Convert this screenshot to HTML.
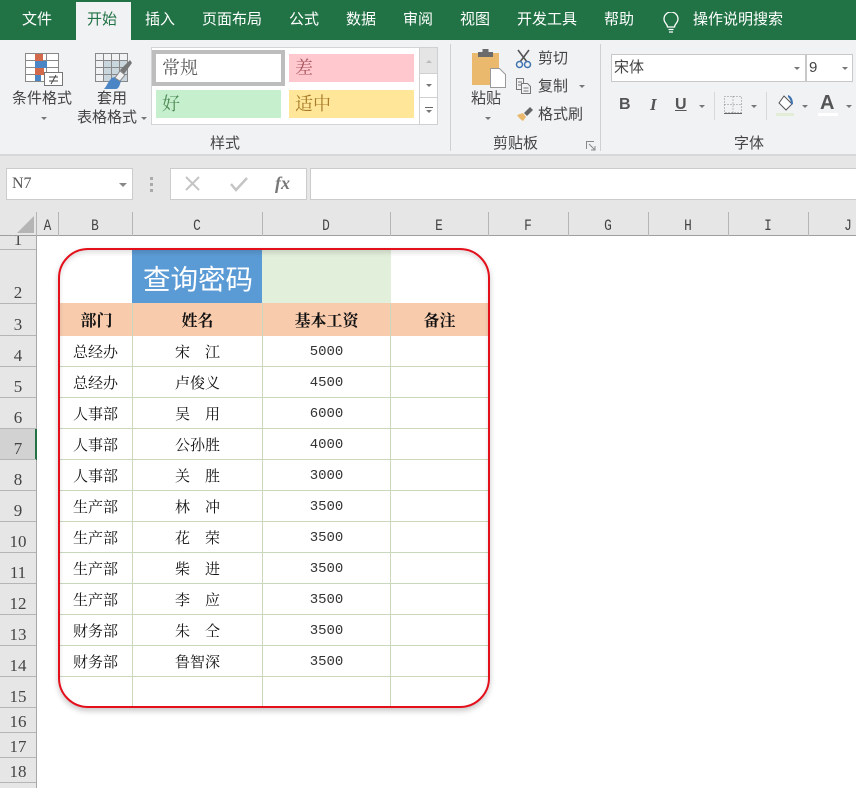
<!DOCTYPE html>
<html lang="zh"><head><meta charset="utf-8"><style>
html,body{margin:0;padding:0}
body{width:856px;height:788px;overflow:hidden;position:relative;background:#fff;font-family:"Liberation Sans","Noto Sans CJK SC",sans-serif;color:#333}
div,span,svg{position:absolute}
.t{white-space:nowrap;font-size:15px;line-height:16px;color:#444}
.tab{color:#fff;top:12px;font-size:15px;line-height:16px;white-space:nowrap}
.s{font-family:"Noto Serif CJK SC","Liberation Serif",serif;color:#111;white-space:nowrap;text-align:center;font-size:15px;line-height:16px}
.hd{font-size:16px;font-weight:700}
.h{top:217px;height:18px;line-height:18px;font-family:"Liberation Mono","Noto Serif CJK SC",monospace;font-size:16px;color:#444;text-align:center;transform:scaleX(.8)}
.r{left:0;width:36px;text-align:center;font-family:"Liberation Serif",serif;font-size:17px;line-height:18px;color:#444}
.n{font-family:"Liberation Mono",monospace;font-size:14px;color:#333;left:262px;width:129px;text-align:center;line-height:16px}
.vl{top:212px;width:1px;height:24px;background:#b5b5b5}
.rl{left:0;width:36px;height:1px;background:#b5b5b5}
.gl{left:60px;width:428px;height:1px;background:#c9d8bd}
.gv{width:1px;background:#c9d8bd}
.a{width:0;height:0;border-left:3px solid transparent;border-right:3px solid transparent;border-top:3px solid #777}
</style></head><body>
<div style="left:0;top:0;width:856px;height:40px;background:#217346"></div>
<div style="left:76px;top:2px;width:55px;height:38px;background:#f1f2f4"></div>
<span class="tab" style="left:22px">文件</span>
<span class="tab" style="left:87px;color:#217346">开始</span>
<span class="tab" style="left:145px">插入</span>
<span class="tab" style="left:202px">页面布局</span>
<span class="tab" style="left:289px">公式</span>
<span class="tab" style="left:346px">数据</span>
<span class="tab" style="left:403px">审阅</span>
<span class="tab" style="left:460px">视图</span>
<span class="tab" style="left:517px">开发工具</span>
<span class="tab" style="left:604px">帮助</span>
<span class="tab" style="left:693px">操作说明搜索</span>
<svg style="left:661px;top:12px" width="20" height="22" viewBox="0 0 20 22" fill="none" stroke="#fff" stroke-width="1.3"><path d="M6.500 15c0-3-3.500-4-3.500-8a7 7 0 0 1 14 0c0 4-3.500 5-3.500 8z"/><path d="M7.500 17.500h5M8 20h4"/></svg>

<div style="left:0;top:40px;width:856px;height:115px;background:#f1f2f4"></div>
<div style="left:0;top:154px;width:856px;height:2px;background:#d8d8d8"></div>

<!-- conditional format icon -->
<svg style="left:24px;top:52px" width="40" height="36" viewBox="0 0 40 36"><g fill="none" stroke="#888" stroke-width="1"><rect x="1.500" y="1.500" width="33" height="28" fill="#fff"/><path d="M1.500 8.500h33M1.500 15.500h33M1.500 22.500h33M11.500 1.500v28M22.500 1.500v28"/></g><rect x="11" y="2" width="8" height="7" fill="#d2694a"/><rect x="11" y="9" width="12" height="7" fill="#4a86c5"/><rect x="11" y="16" width="9" height="7" fill="#d2694a"/><rect x="11" y="23" width="6" height="6" fill="#4a86c5"/><rect x="20.500" y="20.500" width="18" height="13" fill="#fff" stroke="#777"/><path d="M25 25h9M25 29h9M32 23l-5 9" stroke="#444" fill="none"/></svg>
<span class="t" style="left:12px;top:91px">条件格式</span>
<div class="a" style="left:41px;top:117px"></div>
<!-- table format icon -->
<svg style="left:94px;top:52px" width="40" height="38" viewBox="0 0 40 38"><rect x="10" y="9" width="24" height="21" fill="#c9d6de"/><g fill="none" stroke="#888"><rect x="1.500" y="1.500" width="32" height="28"/><path d="M1.500 8.500h32M1.500 15.500h32M1.500 22.500h32M9.500 1.500v28M17.500 1.500v28M25.500 1.500v28"/></g><path d="M26 18l10-10 2 3-8 11z" fill="#777"/><path d="M10 37c3-3 4-8 8-11 3-2 10-1 9 3-1 3-2 8-5 8z" fill="#4a86c5"/><path d="M21 26l5-7 5 4-5 6z" fill="#f1f2f4" stroke="#888"/></svg>
<span class="t" style="left:97px;top:91px">套用</span>
<span class="t" style="left:77px;top:110px">表格格式</span>
<div class="a" style="left:141px;top:117px"></div>

<!-- styles gallery -->
<div style="left:151px;top:47px;width:286px;height:78px;background:#fff;border:1px solid #d4d4d4;box-sizing:border-box"></div>
<div style="left:152px;top:50px;width:133px;height:36px;box-sizing:border-box;border:4px solid #bdbdbd;background:#fff"></div>
<span class="s" style="left:162px;top:58px;font-size:18px;line-height:18px;color:#555">常规</span>
<div style="left:289px;top:54px;width:125px;height:28px;background:#ffc7ce"></div>
<span class="s" style="left:295px;top:58px;font-size:18px;line-height:18px;color:#a8555c">差</span>
<div style="left:156px;top:90px;width:125px;height:28px;background:#c6efce"></div>
<span class="s" style="left:162px;top:94px;font-size:18px;line-height:18px;color:#4e8a55">好</span>
<div style="left:289px;top:90px;width:125px;height:28px;background:#ffe699"></div>
<span class="s" style="left:295px;top:94px;font-size:18px;line-height:18px;color:#a87c28">适中</span>
<div style="left:419px;top:47px;width:19px;height:78px;box-sizing:border-box;border:1px solid #d0d0d0;background:#fff"></div>
<div style="left:420px;top:48px;width:17px;height:25px;background:#e5e5e5;border-bottom:1px solid #d0d0d0"></div>
<div style="left:420px;top:97px;width:17px;height:1px;background:#d0d0d0"></div>
<div class="a" style="left:426px;top:60px;border-top:0;border-bottom:3px solid #bbb"></div>
<div class="a" style="left:426px;top:84px"></div>
<div style="left:425px;top:107px;width:8px;height:1px;background:#666"></div>
<div class="a" style="left:426px;top:110px"></div>
<span class="t" style="left:210px;top:136px">样式</span>
<div style="left:450px;top:44px;width:1px;height:107px;background:#d0d0d0"></div>

<!-- clipboard -->
<svg style="left:470px;top:47px" width="38" height="42" viewBox="0 0 38 42"><rect x="2" y="6" width="27" height="32" fill="#eab96e"/><rect x="8" y="5" width="15" height="5" fill="#6b6b6b"/><rect x="12.500" y="2" width="6" height="5" fill="#6b6b6b"/><path d="M20.500 21.500h9l6 6v13h-15z" fill="#fff" stroke="#999"/></svg>
<span class="t" style="left:471px;top:91px">粘贴</span>
<div class="a" style="left:485px;top:117px"></div>
<svg style="left:515px;top:49px" width="18" height="20" viewBox="0 0 18 20" fill="none"><path d="M3 1l9 12M14 1L5 13" stroke="#555" stroke-width="1.600"/><circle cx="4.500" cy="15.500" r="3" stroke="#3f74b0" stroke-width="1.500"/><circle cx="12.500" cy="15.500" r="3" stroke="#3f74b0" stroke-width="1.500"/></svg>
<span class="t" style="left:538px;top:51px">剪切</span>
<svg style="left:515px;top:77px" width="18" height="18" viewBox="0 0 18 18" fill="none" stroke="#777"><path d="M1.500 1.500h7v11h-7zM3 5h4M3 8h4"/><path d="M6.500 6.500h6l3 3v7h-9z" fill="#f1f2f4"/><path d="M8.500 11h5M8.500 14h5"/></svg>
<span class="t" style="left:538px;top:79px">复制</span>
<div class="a" style="left:579px;top:85px"></div>
<svg style="left:516px;top:106px" width="18" height="16" viewBox="0 0 18 16"><path d="M1 9l6-2 3 4-3 4c-2-1-4-3-6-6z" fill="#eab96e"/><path d="M8 7l6-6 3 3-6 6z" fill="#666"/></svg>
<span class="t" style="left:538px;top:107px">格式刷</span>
<span class="t" style="left:493px;top:136px">剪贴板</span>
<svg style="left:586px;top:141px" width="10" height="10" viewBox="0 0 10 10" fill="none" stroke="#888"><path d="M.5 8V.5H8M3 3l5.500 5.500M9 5v4H5"/></svg>
<div style="left:600px;top:44px;width:1px;height:107px;background:#d0d0d0"></div>

<!-- font -->
<div style="left:611px;top:54px;width:195px;height:28px;box-sizing:border-box;background:#fff;border:1px solid #c8c8c8"></div>
<span class="t" style="left:614px;top:60px">宋体</span>
<div class="a" style="left:794px;top:67px"></div>
<div style="left:806px;top:54px;width:47px;height:28px;box-sizing:border-box;background:#fff;border:1px solid #c8c8c8"></div>
<span class="t" style="left:809px;top:60px">9</span>
<div class="a" style="left:842px;top:67px"></div>
<span class="t" style="left:619px;top:97px;font-weight:bold;font-size:16px;color:#555">B</span>
<span class="t" style="left:650px;top:97px;font-family:'Liberation Serif',serif;font-style:italic;font-weight:bold;font-size:17px;color:#555">I</span>
<span class="t" style="left:675px;top:97px;font-weight:bold;font-size:16px;color:#555;text-decoration:underline">U</span>
<div class="a" style="left:699px;top:105px"></div>
<div style="left:714px;top:92px;width:1px;height:28px;background:#d8d8d8"></div>
<svg style="left:724px;top:96px" width="18" height="18" viewBox="0 0 18 18" fill="none" stroke="#888" stroke-dasharray="1 2"><path d="M.5.500h17v16H.5zM9 .5v16M.5 8.500h17"/><path d="M0 17.500h18" stroke-dasharray="none" stroke="#666"/></svg>
<div class="a" style="left:751px;top:105px"></div>
<div style="left:766px;top:92px;width:1px;height:28px;background:#d8d8d8"></div>
<svg style="left:776px;top:94px" width="20" height="22" viewBox="0 0 20 22"><path d="M8 2l8 8-6 6-7-7z" fill="#fff" stroke="#555"/><path d="M12 1c3 1 5 4 5 9l-2 1c0-4-1-6-3-8z" fill="#3f74b0"/><rect x="0" y="19" width="18" height="3" fill="#e3ecd6"/></svg>
<div class="a" style="left:802px;top:105px"></div>
<span class="t" style="left:820px;top:93px;font-weight:bold;font-size:20px;line-height:20px;color:#555">A</span>
<div style="left:818px;top:113px;width:20px;height:3px;background:#fff"></div>
<div class="a" style="left:846px;top:105px"></div>
<span class="t" style="left:734px;top:136px">字体</span>

<!-- formula bar -->
<div style="left:0;top:156px;width:856px;height:56px;background:#e6e6e6"></div>
<div style="left:6px;top:168px;width:127px;height:32px;box-sizing:border-box;background:#fff;border:1px solid #ccc"></div>
<span class="t" style="left:12px;top:176px;font-family:'Liberation Serif',serif;font-size:16px;color:#555">N7</span>
<div class="a" style="left:119px;top:183px;border-left-width:4px;border-right-width:4px;border-top-width:4px;border-top-color:#888"></div>
<div style="left:150px;top:177px;width:3px;height:3px;background:#aaa"></div>
<div style="left:150px;top:183px;width:3px;height:3px;background:#aaa"></div>
<div style="left:150px;top:189px;width:3px;height:3px;background:#aaa"></div>
<div style="left:170px;top:168px;width:137px;height:32px;box-sizing:border-box;background:#fff;border:1px solid #ccc"></div>
<svg style="left:184px;top:176px" width="18" height="16" viewBox="0 0 18 16" fill="none" stroke="#c4c4c4" stroke-width="2"><path d="M2 1l13 13M15 1L2 14"/></svg>
<svg style="left:229px;top:176px" width="20" height="16" viewBox="0 0 20 16" fill="none" stroke="#c4c4c4" stroke-width="2.500"><path d="M2 8l5 6L18 2"/></svg>
<span class="t" style="left:275px;top:173px;font-family:'Liberation Serif',serif;font-style:italic;font-weight:bold;font-size:18px;line-height:20px;color:#777">fx</span>
<div style="left:310px;top:168px;width:550px;height:32px;box-sizing:border-box;background:#fff;border:1px solid #ccc"></div>

<!-- column headers -->
<div style="left:0;top:212px;width:856px;height:24px;background:#e6e6e6"></div>
<div style="left:0;top:235px;width:856px;height:1px;background:#9f9f9f"></div>
<svg style="left:17px;top:216px" width="17" height="17"><path d="M17 0v17H0z" fill="#b5b5b5"/></svg>
<div class="vl" style="left:36px"></div><div class="vl" style="left:58px"></div><div class="vl" style="left:132px"></div><div class="vl" style="left:262px"></div><div class="vl" style="left:390px"></div><div class="vl" style="left:488px"></div><div class="vl" style="left:568px"></div><div class="vl" style="left:648px"></div><div class="vl" style="left:728px"></div><div class="vl" style="left:808px"></div>
<span class="h" style="left:37px;width:21px">A</span>
<span class="h" style="left:58px;width:74px">B</span>
<span class="h" style="left:132px;width:130px">C</span>
<span class="h" style="left:262px;width:128px">D</span>
<span class="h" style="left:390px;width:98px">E</span>
<span class="h" style="left:488px;width:80px">F</span>
<span class="h" style="left:568px;width:80px">G</span>
<span class="h" style="left:648px;width:80px">H</span>
<span class="h" style="left:728px;width:80px">I</span>
<span class="h" style="left:808px;width:80px">J</span>

<!-- row headers -->
<div style="left:0;top:236px;width:36px;height:552px;background:#e6e6e6;overflow:hidden"></div>
<div style="left:36px;top:236px;width:1px;height:552px;background:#a8a8a8"></div>
<div style="left:0;top:429px;width:36px;height:31px;background:#d2d2d2"></div>
<div style="left:35px;top:429px;width:2px;height:31px;background:#217346"></div>
<div class="rl" style="top:249px"></div><div class="rl" style="top:303px"></div><div class="rl" style="top:335px"></div><div class="rl" style="top:366px"></div><div class="rl" style="top:397px"></div><div class="rl" style="top:428px"></div><div class="rl" style="top:459px"></div><div class="rl" style="top:490px"></div><div class="rl" style="top:521px"></div><div class="rl" style="top:552px"></div><div class="rl" style="top:583px"></div><div class="rl" style="top:614px"></div><div class="rl" style="top:645px"></div><div class="rl" style="top:676px"></div><div class="rl" style="top:707px"></div><div class="rl" style="top:732px"></div><div class="rl" style="top:757px"></div><div class="rl" style="top:782px"></div>
<div style="left:0;top:236px;width:36px;height:13px;overflow:hidden"><span class="r" style="top:-5px">1</span></div>
<span class="r" style="top:284px">2</span>
<span class="r" style="top:316px">3</span>
<span class="r" style="top:347px">4</span>
<span class="r" style="top:378px">5</span>
<span class="r" style="top:409px">6</span>
<span class="r" style="top:440px">7</span>
<span class="r" style="top:471px">8</span>
<span class="r" style="top:502px">9</span>
<span class="r" style="top:533px">10</span>
<span class="r" style="top:564px">11</span>
<span class="r" style="top:595px">12</span>
<span class="r" style="top:626px">13</span>
<span class="r" style="top:657px">14</span>
<span class="r" style="top:688px">15</span>
<span class="r" style="top:713px">16</span>
<span class="r" style="top:738px">17</span>
<span class="r" style="top:763px">18</span>

<!-- sheet -->
<div style="left:132px;top:250px;width:130px;height:53px;background:#5b9bd5"></div>
<div style="left:262px;top:250px;width:129px;height:53px;background:#e2efda"></div>
<span class="s" style="left:133px;top:261px;width:130px;font-family:'Noto Sans CJK SC',sans-serif;font-size:27.5px;line-height:32px;color:#fff">查询密码</span>
<div style="left:59px;top:303px;width:429px;height:33px;background:#f8cbad"></div>
<div class="gl" style="top:366px"></div><div class="gl" style="top:397px"></div><div class="gl" style="top:428px"></div><div class="gl" style="top:459px"></div><div class="gl" style="top:490px"></div><div class="gl" style="top:521px"></div><div class="gl" style="top:552px"></div><div class="gl" style="top:583px"></div><div class="gl" style="top:614px"></div><div class="gl" style="top:645px"></div><div class="gl" style="top:676px"></div>
<div class="gv" style="left:132px;top:303px;height:404px"></div><div class="gv" style="left:262px;top:303px;height:404px"></div><div class="gv" style="left:390px;top:303px;height:404px"></div>

<span class="s hd" style="left:58px;width:77px;top:312px">部门</span>
<span class="s hd" style="left:132px;width:131px;top:312px">姓名</span>
<span class="s hd" style="left:262px;width:129px;top:312px">基本工资</span>
<span class="s hd" style="left:390px;width:99px;top:312px">备注</span>

<span class="s" style="left:58px;width:75px;top:344px">总经办</span><span class="s" style="left:132px;width:131px;top:344px">宋　江</span><span class="n" style="top:344px">5000</span>
<span class="s" style="left:58px;width:75px;top:375px">总经办</span><span class="s" style="left:132px;width:131px;top:375px">卢俊义</span><span class="n" style="top:375px">4500</span>
<span class="s" style="left:58px;width:75px;top:406px">人事部</span><span class="s" style="left:132px;width:131px;top:406px">吴　用</span><span class="n" style="top:406px">6000</span>
<span class="s" style="left:58px;width:75px;top:437px">人事部</span><span class="s" style="left:132px;width:131px;top:437px">公孙胜</span><span class="n" style="top:437px">4000</span>
<span class="s" style="left:58px;width:75px;top:468px">人事部</span><span class="s" style="left:132px;width:131px;top:468px">关　胜</span><span class="n" style="top:468px">3000</span>
<span class="s" style="left:58px;width:75px;top:499px">生产部</span><span class="s" style="left:132px;width:131px;top:499px">林　冲</span><span class="n" style="top:499px">3500</span>
<span class="s" style="left:58px;width:75px;top:530px">生产部</span><span class="s" style="left:132px;width:131px;top:530px">花　荣</span><span class="n" style="top:530px">3500</span>
<span class="s" style="left:58px;width:75px;top:561px">生产部</span><span class="s" style="left:132px;width:131px;top:561px">柴　进</span><span class="n" style="top:561px">3500</span>
<span class="s" style="left:58px;width:75px;top:592px">生产部</span><span class="s" style="left:132px;width:131px;top:592px">李　应</span><span class="n" style="top:592px">3500</span>
<span class="s" style="left:58px;width:75px;top:623px">财务部</span><span class="s" style="left:132px;width:131px;top:623px">朱　仝</span><span class="n" style="top:623px">3500</span>
<span class="s" style="left:58px;width:75px;top:654px">财务部</span><span class="s" style="left:132px;width:131px;top:654px">鲁智深</span><span class="n" style="top:654px">3500</span>

<!-- red frame -->
<div style="left:58px;top:248px;width:432px;height:460px;box-sizing:border-box;border:2px solid #e3101c;border-radius:30px;box-shadow:0 3px 6px rgba(0,0,0,.22),inset 0 3px 5px rgba(0,0,0,.12)"></div>
</body></html>
